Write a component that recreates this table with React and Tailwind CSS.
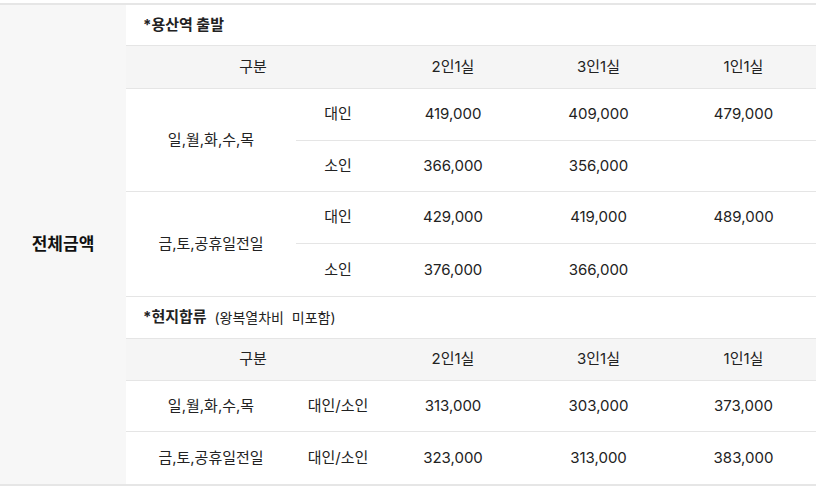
import React from 'react';

const groupA = [
  {
    day: '일,월,화,수,목',
    rows: [
      { type: '대인', h: 'h-[52px]', prices: ['419,000', '409,000', '479,000'] },
      { type: '소인', h: 'h-[50px]', prices: ['366,000', '356,000', ''] },
    ],
  },
  {
    day: '금,토,공휴일전일',
    rows: [
      { type: '대인', h: 'h-[52px]', prices: ['429,000', '419,000', '489,000'] },
      { type: '소인', h: 'h-[52px]', prices: ['376,000', '366,000', ''] },
    ],
  },
];

const groupB = [
  { day: '일,월,화,수,목', type: '대인/소인', h: 'h-[51px]', prices: ['313,000', '303,000', '373,000'] },
  { day: '금,토,공휴일전일', type: '대인/소인', h: 'h-[52px]', prices: ['323,000', '313,000', '383,000'] },
];

const priceCols = ['w-[146px]', 'w-[145px]', 'w-[145px]'];

const PriceCells = ({ prices }) => (
  <>
    {prices.map((p, i) => (
      <div key={i} className={`${priceCols[i]} flex items-center justify-center`}>
        {p}
      </div>
    ))}
  </>
);

const HeaderRow = ({ h }) => (
  <div className={`flex ${h} border-b border-[#e5e5e5] bg-[#f5f5f5]`}>
    <div className="w-[254px] flex items-center justify-center">구분</div>
    <PriceCells prices={['2인1실', '3인1실', '1인1실']} />
  </div>
);

export default function App() {
  return (
    <div
      className="w-[820px] bg-white pt-[3px] text-[15px] text-[#222]"
      style={{ fontFamily: 'Inter, "Noto Sans CJK KR", sans-serif' }}
    >
      <div className="flex w-[816px] border-t-2 border-b-2 border-[#e6e6e6]">
        {/* left label */}
        <div className="w-[126px] bg-[#f7f7f7] flex items-center justify-center text-[17px] font-bold text-[#111]">
          전체금액
        </div>

        {/* table */}
        <div className="w-[690px] flex flex-col">
          <div className="h-[41px] border-b border-[#e5e5e5] flex items-center pl-[17px] font-bold">
            *용산역 출발
          </div>
          <HeaderRow h="h-[43px]" />
          {groupA.map((g, gi) => (
            <div key={gi} className="flex border-b border-[#e5e5e5]">
              <div className="w-[170px] flex items-center justify-center">{g.day}</div>
              <div className="flex flex-col">
                {g.rows.map((r, ri) => (
                  <div
                    key={ri}
                    className={`flex ${r.h} ${ri === 0 ? 'border-b border-[#e5e5e5]' : ''}`}
                  >
                    <div className="w-[84px] flex items-center justify-center">{r.type}</div>
                    <PriceCells prices={r.prices} />
                  </div>
                ))}
              </div>
            </div>
          ))}
          <div className="h-[42px] border-b border-[#e5e5e5] flex items-center pl-[17px]">
            <span className="font-bold">*현지합류</span>
            <span className="whitespace-pre text-[14px]">{'  (왕복열차비  미포함)'}</span>
          </div>
          <HeaderRow h="h-[42px]" />
          {groupB.map((r, i) => (
            <div
              key={i}
              className={`flex ${r.h} ${i < groupB.length - 1 ? 'border-b border-[#e5e5e5]' : ''}`}
            >
              <div className="w-[170px] flex items-center justify-center">{r.day}</div>
              <div className="w-[84px] flex items-center justify-center">{r.type}</div>
              <PriceCells prices={r.prices} />
            </div>
          ))}
        </div>
      </div>
    </div>
  );
}
